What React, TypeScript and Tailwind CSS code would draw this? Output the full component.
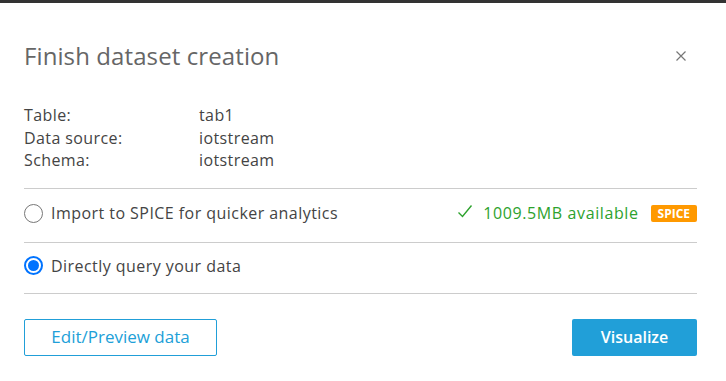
import React from "react";

export default function App() {
  return (
    <div className="w-[726px] h-[381px] bg-white overflow-hidden" style={{ fontFamily: '"Open Sans", sans-serif' }}>
      <div className="h-[3px] bg-[#333333]" />
      <div className="pl-[24px] pr-[29px]">
        <div className="flex items-center justify-between pt-[38px]">
          <h1 className="text-[24px] leading-[30px] text-[#666666] tracking-[0.1px]">Finish dataset creation</h1>
          <svg width="12" height="12" viewBox="0 0 12 12" className="mr-[10px]">
            <path d="M1.5 1.5 L10.5 10.5 M10.5 1.5 L1.5 10.5" stroke="#777" strokeWidth="1.2" />
          </svg>
        </div>
        <div className="mt-[33px] text-[16px] leading-[22.5px] text-[#444444] tracking-[0.4px]">
          <div className="flex"><span className="w-[175px]">Table:</span><span>tab1</span></div>
          <div className="flex"><span className="w-[175px]">Data source:</span><span>iotstream</span></div>
          <div className="flex"><span className="w-[175px]">Schema:</span><span>iotstream</span></div>
        </div>
        <div className="mt-[16px] border-t border-[#cccccc]" />
        <div className="flex items-center h-[53px] pb-[4px] text-[16px] text-[#444444] tracking-[0.45px]">
          <span className="w-[19px] h-[19px] rounded-full border border-[#777777] bg-white mr-[8px]" />
          <span>Import to SPICE for quicker analytics</span>
          <span className="ml-auto flex items-center text-[#2da22d] tracking-[0.6px]">
            <svg width="16" height="16" viewBox="0 0 16 16" className="mr-[10px] -mt-[3px]">
              <path d="M1.5 8.5 L5.5 12.5 L14.5 1.5" stroke="#2da22d" strokeWidth="1.4" fill="none" />
            </svg>
            1009.5MB available
          </span>
          <span className="ml-[12px] h-[17px] px-[7px] rounded-[2px] bg-[#ff9900] text-white text-[12px] font-bold leading-[17px] tracking-normal">SPICE</span>
        </div>
        <div className="border-t border-[#cccccc]" />
        <div className="flex items-center h-[50px] pb-[4px] text-[16px] text-[#444444] tracking-[0.45px]">
          <span className="w-[19px] h-[19px] rounded-full border-[2px] border-[#0073ff] bg-white mr-[8px] flex items-center justify-center">
            <span className="w-[11px] h-[11px] rounded-full bg-[#0073ff]" />
          </span>
          <span>Directly query your data</span>
        </div>
        <div className="border-t border-[#cccccc]" />
        <div className="flex justify-between mt-[25px]">
          <button className="w-[193px] h-[37px] border border-[#219fd8] rounded-[2px] text-[#219fd8] text-[17px] bg-white">Edit/Preview data</button>
          <button className="w-[125px] h-[37px] rounded-[2px] bg-[#219fd8] text-white text-[16px] font-semibold">Visualize</button>
        </div>
      </div>
    </div>
  );
}
